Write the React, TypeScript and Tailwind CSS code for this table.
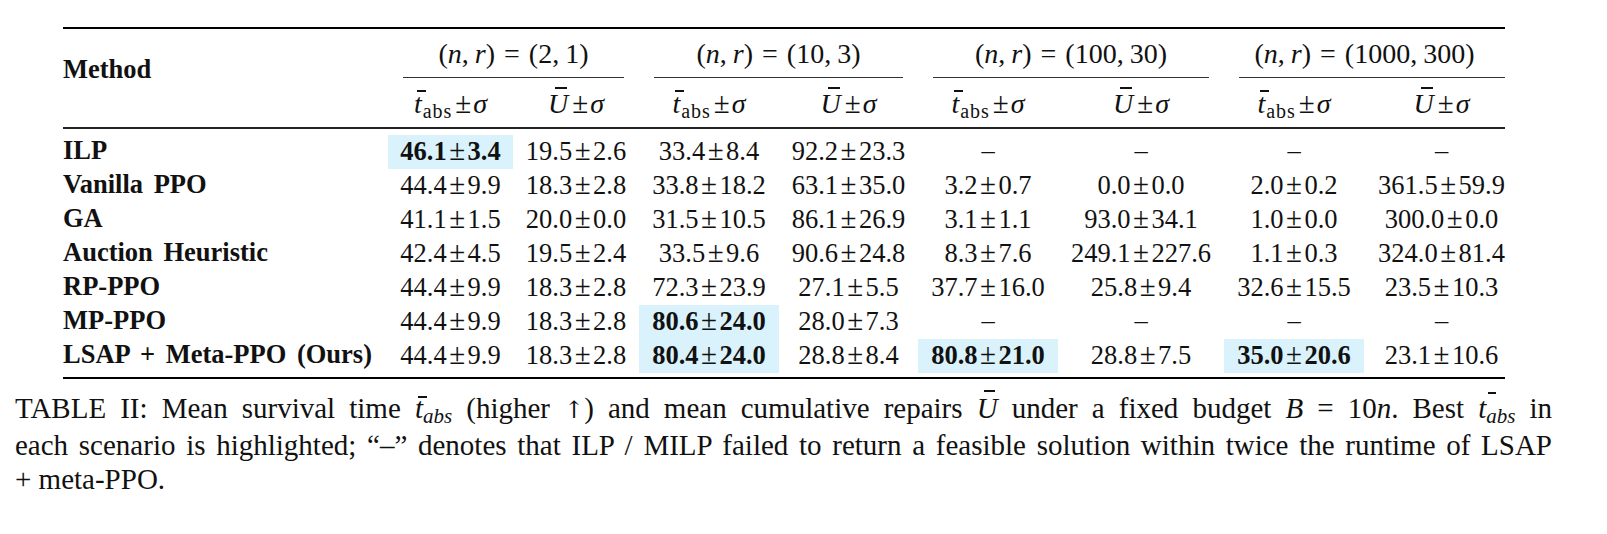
import React from "react"

type Row = { name: string; vals: string[]; hl: number[] }

const rows: Row[] = [
    { name: "ILP", vals: ["46.1±3.4", "19.5±2.6", "33.4±8.4", "92.2±23.3", "–", "–", "–", "–"], hl: [0] },
    { name: "Vanilla PPO", vals: ["44.4±9.9", "18.3±2.8", "33.8±18.2", "63.1±35.0", "3.2±0.7", "0.0±0.0", "2.0±0.2", "361.5±59.9"], hl: [] },
    { name: "GA", vals: ["41.1±1.5", "20.0±0.0", "31.5±10.5", "86.1±26.9", "3.1±1.1", "93.0±34.1", "1.0±0.0", "300.0±0.0"], hl: [] },
    { name: "Auction Heuristic", vals: ["42.4±4.5", "19.5±2.4", "33.5±9.6", "90.6±24.8", "8.3±7.6", "249.1±227.6", "1.1±0.3", "324.0±81.4"], hl: [] },
    { name: "RP-PPO", vals: ["44.4±9.9", "18.3±2.8", "72.3±23.9", "27.1±5.5", "37.7±16.0", "25.8±9.4", "32.6±15.5", "23.5±10.3"], hl: [] },
    { name: "MP-PPO", vals: ["44.4±9.9", "18.3±2.8", "80.6±24.0", "28.0±7.3", "–", "–", "–", "–"], hl: [2] },
    { name: "LSAP + Meta-PPO (Ours)", vals: ["44.4±9.9", "18.3±2.8", "80.4±24.0", "28.8±8.4", "80.8±21.0", "28.8±7.5", "35.0±20.6", "23.1±10.6"], hl: [2, 4, 6] },
]

const groups = [["2", "1"], ["10", "3"], ["100", "30"], ["1000", "300"]]

function Pm() {
    return <span className="mx-[2.5px] text-[29px] font-normal">±</span>
}

function Val({ v }: { v: string }) {
    if (!v.includes("±")) return <span className="font-normal">{v}</span>
    const [a, b] = v.split("±")
    return <>{a}<Pm />{b}</>
}

function TBar() {
    return (
        <span className="whitespace-nowrap">
            <span className="relative italic text-[28px]">t<span className="absolute left-[3px] top-[2px] h-[1.5px] w-[9px] bg-[#111]" /></span>
            <span className="relative top-[5px] ml-[1px] text-[20px] tracking-[1px]">abs</span>
            <span className="ml-[3px] mr-[2px] text-[29px]">±</span>
            <span className="italic text-[28px]">σ</span>
        </span>
    )
}

function UBar() {
    return (
        <span className="whitespace-nowrap">
            <span className="relative italic text-[28px]">U<span className="absolute left-[7px] top-[-1px] h-[1.5px] w-[12px] bg-[#111]" /></span>
            <span className="ml-[4px] mr-[2px] text-[29px]">±</span>
            <span className="italic text-[28px]">σ</span>
        </span>
    )
}

export default function App() {
    return (
        <div className="min-h-screen bg-white text-[#111] font-['Liberation_Serif',serif]">
            <div className="ml-[63px] pt-[27px] w-[1442px] grid grid-cols-[325px_125px_126px_140px_139px_140px_166px_140px_141px] text-[26.5px]">
                {/* top rule */}
                <div className="col-span-9 h-[2px] bg-black" />

                <div className="row-span-3 pt-[23px] leading-[34px] font-bold">Method</div>
                {groups.map(([n, r]) => (
                    <div key={n} className="col-span-2 h-[48px] pt-[8px] leading-[34px] text-center whitespace-nowrap text-[28px]">
                        (<i>n</i>,<i className="ml-[6px]">r</i>)<span className="mx-[9px]">=</span>({n},<span className="ml-[6px]">{r}</span>)
                    </div>
                ))}
                {groups.map(([n], i) => (
                    <div key={"c" + n} className={`col-span-2 h-px bg-[#333] ml-[15px] ${i === 3 ? "mr-0" : "mr-[15px]"}`} />
                ))}
                {groups.map(([n], i) => (
                    <React.Fragment key={"s" + n}>
                        <div className="h-[49px] pt-[8px] leading-[34px] text-center"><TBar /></div>
                        <div className={`h-[49px] pt-[8px] leading-[34px] text-center ${i === 3 ? "pl-[14px]" : ""}`}><UBar /></div>
                    </React.Fragment>
                ))}

                {/* midrule */}
                <div className="col-span-9 h-[2px] bg-[#222]" />
                <div className="col-span-9 h-[6px]" />

                {rows.map((r) => (
                    <React.Fragment key={r.name}>
                        <div className="h-[34px] leading-[30px] font-bold whitespace-nowrap [word-spacing:4px]">{r.name}</div>
                        {r.vals.map((v, i) => (
                            <div
                                key={i}
                                className={`h-[34px] leading-[30px] text-center whitespace-nowrap ${r.hl.includes(i) ? "bg-[#daf2fb] font-bold" : ""} ${i === 7 ? "pl-[14px]" : ""}`}
                            >
                                <Val v={v} />
                            </div>
                        ))}
                    </React.Fragment>
                ))}

                <div className="col-span-9 h-[4px]" />
                {/* bottom rule */}
                <div className="col-span-9 h-[2px] bg-black" />
            </div>

            <div className="ml-[15px] mt-[12px] w-[1537px] text-[29px] leading-[34px]">
                <div className="text-justify [text-align-last:justify]">
                    TABLE II: Mean survival time{" "}
                    <span className="whitespace-nowrap">
                        <span className="relative italic">t<span className="absolute left-[3px] top-[4px] h-[1.5px] w-[9px] bg-[#111]" /></span>
                        <span className="relative top-[5px] text-[21px] italic">abs</span>
                    </span>{" "}
                    (higher <span className="font-['DejaVu_Serif',serif] text-[24px]">↑</span>) and mean cumulative repairs{" "}
                    <span className="relative italic">U<span className="absolute left-[7px] top-[-2px] h-[1.5px] w-[11px] bg-[#111]" /></span>{" "}
                    under a fixed budget <i>B</i> = 10<i>n</i>. Best{" "}
                    <span className="whitespace-nowrap">
                        <span className="italic">t</span>
                        <span className="relative top-[5px] text-[21px] italic">
                            abs<span className="absolute left-[2px] top-[-12px] h-[1.5px] w-[8px] bg-[#111]" />
                        </span>
                    </span>{" "}
                    in
                </div>
                <div className="text-justify [text-align-last:justify]">
                    each scenario is highlighted; “–” denotes that ILP / MILP failed to return a feasible solution within twice the runtime of LSAP
                </div>
                <div>+ meta-PPO.</div>
            </div>
        </div>
    )
}
